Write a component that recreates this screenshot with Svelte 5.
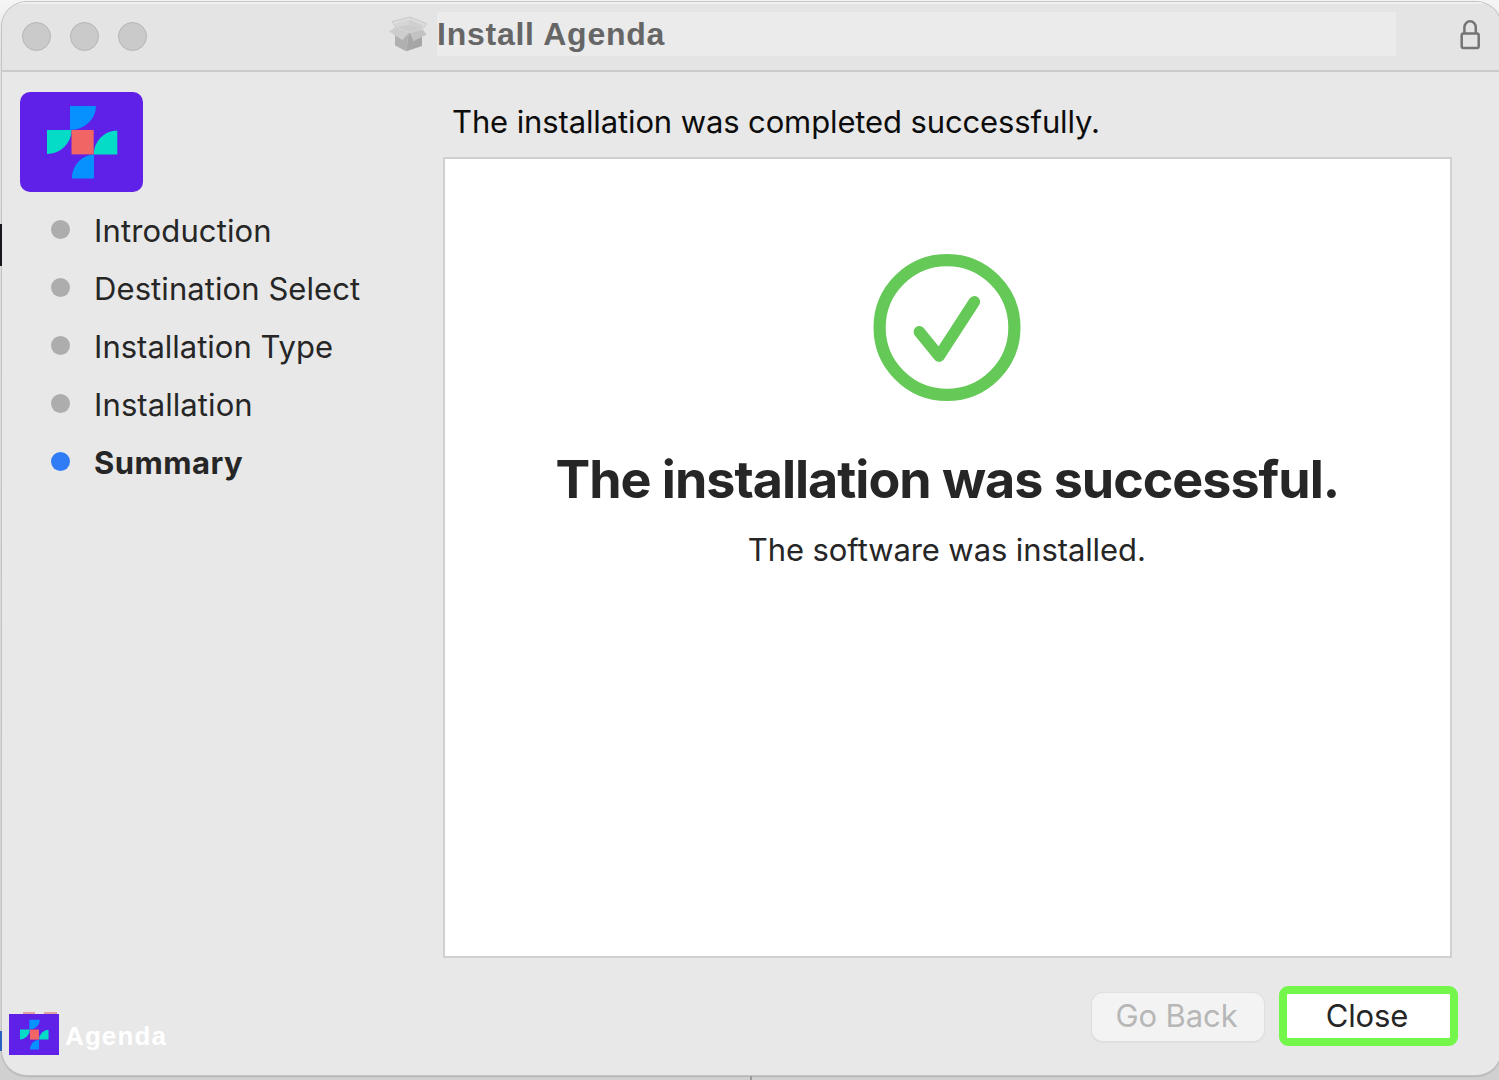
<script>
  const steps = [
    { label: 'Introduction', cls: 'intro' },
    { label: 'Destination Select', cls: 'dest' },
    { label: 'Installation Type', cls: 'kind' },
    { label: 'Installation', cls: 'inst' },
    { label: 'Summary', cls: 'current' }
  ];
</script>

{#snippet brand()}
  <svg viewBox="0 0 123 100" preserveAspectRatio="none" aria-hidden="true">
    <path d="M50 14H76A26 24 0 0 1 50 38Z" fill="#0691ff" />
    <path d="M27 38H51.500A24.500 24 0 0 1 27 62Z" fill="#04dcc8" />
    <path d="M97.300 38.500V62.400H73.800A23.500 23.900 0 0 1 97.300 38.500Z" fill="#04dcc8" />
    <path d="M74 62.600V86.600H51.800A22.200 24 0 0 1 74 62.600Z" fill="#0691ff" />
    <rect x="51.500" y="38" width="22.200" height="24.400" fill="#f26565" />
  </svg>
{/snippet}

<div class="desktop">
  <main class="window">
    <header>
      <div class="lights"><i></i><i></i><i></i></div>
      <svg class="box" viewBox="0 0 40 36" aria-hidden="true">
        <path d="M7 11 21 15 18.300 35.300 7 29.500Z" fill="#b0b0b0" />
        <path d="M21 15 34 13V30L18.300 35.300Z" fill="#a6a6a6" />
        <path d="M7.500 11 9 4.500 22 2.500 35.500 8 34 13.500 20.500 16.500Z" fill="#cbcbcb" />
        <path d="M9 5.500 22 2.500 21 9 8 11Z" fill="#d6d6d6" />
        <path d="M22 3 35.500 8 33 12.500 21 9Z" fill="#cfcfcf" />
        <path d="M4 5.500 22 1 38.700 7.700 34.500 13 34.300 9 22 4 8.500 7 8 11Z" fill="#dcdcdc" />
        <path d="M4 5.500 22 1 38.700 7.700 34.500 13M4 5.500 8 11" fill="none" stroke="#bfbfbf" stroke-width=".7" />
        <path d="M8 11 21.500 16.500 14.300 24 1 15.500Z" fill="#cdcdcd" />
        <path d="M21.500 16.500 34.500 13 38.500 18.500 25.500 25.300Z" fill="#c3c3c3" />
        <path d="M8 11 21.500 16.500 34.500 13" fill="none" stroke="#dadada" stroke-width=".8" />
      </svg>
      <h1>Install Agenda</h1>
      <svg class="lock" viewBox="0 0 20 30" aria-hidden="true">
        <path d="M4.400 13.500V7.500a5.700 6.200 0 0 1 11.400 0v6" />
        <rect x="1.700" y="13.500" width="17" height="14.500" rx="1.800" />
      </svg>
    </header>

    <div class="body">
      <aside>
        <div class="logo">{@render brand()}</div>
        <ol>
          {#each steps as step}
            <li class={step.cls}><i></i><span>{step.label}</span></li>
          {/each}
        </ol>
        <div class="app"><div class="mini">{@render brand()}</div><span>Agenda</span><i class="peek"></i></div>
      </aside>

      <section>
        <p class="caption">The installation was completed successfully.</p>
        <div class="panel">
          <svg class="check" viewBox="0 0 148 148" aria-hidden="true">
            <circle cx="74" cy="73.500" r="67.400" stroke-width="12.200" />
            <path d="M46.400 77.800 66.100 102.100 101.300 47.800" stroke-width="11.600" />
          </svg>
          <h2>The installation was successful.</h2>
          <p>The software was installed.</p>
        </div>
        <footer>
          <button class="back" disabled>Go Back</button>
          <button class="close"><span>Close</span></button>
        </footer>
      </section>
    </div>
  </main>
  <i class="sliver dark"></i>
  <i class="sliver blue"></i>
  <i class="sliver tick"></i>
</div>

<style>
  :global(body) { overflow: hidden; }
  .desktop {
    position: relative;
    box-sizing: border-box;
    width: 1499px;
    height: 1080px;
    padding: 2px 0 0 2px;
    overflow: hidden;
    background: linear-gradient(#f5f5f5, #e6e6e6 60px, #d5d5d5 1020px, #d0d0d0);
    font-family: Inter, 'Liberation Sans', sans-serif;
    font-size: 31px;
    color: #262626;
  }
  .sliver { position: absolute; }
  .dark { left: 0; top: 224px; width: 2px; height: 42px; background: #17181d; }
  .blue { left: 0; top: 1031px; width: 2px; height: 20px; background: #2860c0; }
  .tick { left: 750px; top: 1076px; width: 2px; height: 4px; background: #999; }
  .window {
    position: relative;
    width: 1499px;
    height: 1073px;
    border-radius: 25px;
    background: #e8e8e8;
    box-shadow: 0 0 0 1px #c4c4c4, 0 1px 1px 1px #b4b4b4;
    overflow: hidden;
  }
  header {
    display: flex;
    box-sizing: border-box;
    height: 70px;
    padding: 10px 0 0 19.600px;
    background: #e4e4e4;
    border-bottom: 2px solid #cacaca;
    box-shadow: inset 0 2px 0 #f0f0f0;
  }
  .lights { display: flex; gap: 19.200px; padding-top: 10px; width: 366.400px; }
  .lights i {
    box-sizing: border-box;
    width: 29px;
    height: 29px;
    border: 1.500px solid #b5b5b5;
    border-radius: 50%;
    background: #cacaca;
  }
  .box { width: 40px; height: 36px; margin-top: 4px; }
  h1 {
    box-sizing: border-box;
    width: 959px;
    height: 44px;
    margin: 0 0 0 9px;
    background: #ebebeb;
    color: #666;
    font: 700 32px/44px 'Liberation Sans', sans-serif;
    letter-spacing: .76px;
  }
  .lock { width: 20px; height: 30px; margin: 7.700px 0 0 64.300px; fill: none; stroke: #747474; stroke-width: 2.500; }
  .body { display: flex; }
  aside { display: flex; flex-direction: column; width: 440.600px; height: 1003px; }
  .logo { width: 123px; height: 100px; margin: 20px 0 0 18px; border-radius: 10px; background: #5f20e7; }
  svg { display: block; flex: none; }
  .logo svg, .mini svg { width: 100%; height: 100%; }
  ol { margin: 9px 0 0 48.600px; padding: 0; list-style: none; }
  li { display: flex; align-items: center; height: 58px; line-height: 56px; }
  li i { width: 19.500px; height: 19.500px; margin: -1px 24px 0 0; border-radius: 50%; background: #adadad; }
  li span { padding-top: 2px; white-space: nowrap; }
  .intro { letter-spacing: .13px; }
  .dest { letter-spacing: .07px; }
  .inst { letter-spacing: .08px; }
  .current { font-weight: 700; letter-spacing: .45px; }
  .current i { background: #307cf7; }
  .app { position: relative; display: flex; gap: 6px; margin: 523px 0 0 7px; }
  .mini { width: 50px; height: 41px; background: #5f20e7; }
  .app span { height: 43px; color: #fff; font: 700 26px/45px 'Liberation Sans', sans-serif; letter-spacing: 1.100px; }
  .peek {
    position: absolute;
    left: 14px;
    top: -2px;
    width: 34px;
    height: 2px;
    background: linear-gradient(90deg, #e0a09f 12px, transparent 12px 21px, #e0a09f 21px);
  }
  section { width: 1009.400px; }
  p, h2 { margin: 0; white-space: nowrap; }
  .caption { height: 66px; margin-top: 19px; padding-left: 9.400px; color: #0c0c0c; line-height: 62px; letter-spacing: -.12px; }
  .panel {
    display: flex;
    flex-direction: column;
    align-items: center;
    box-sizing: border-box;
    height: 801px;
    padding-top: 95px;
    border: 2px solid #d0d0d0;
    background: #fff;
  }
  .check { width: 148px; height: 148px; fill: none; stroke: #65c957; stroke-linecap: round; stroke-linejoin: round; }
  h2 { margin-top: 43px; font-size: 52px; line-height: 70px; font-weight: 700; letter-spacing: -1px; }
  .panel p { margin-top: 15px; margin-left: -1px; line-height: 40px; letter-spacing: -.1px; }
  footer { display: flex; align-items: center; justify-content: flex-end; gap: 15px; margin: 28px -6px 0 0; }
  button { box-sizing: border-box; margin: 0; padding: 0; font: inherit; }
  .back {
    width: 172px;
    height: 48px;
    margin-top: 2px;
    padding: 0 3px 3px 0;
    border: 0;
    border-radius: 11px;
    background: #f3f3f3;
    color: #b7b7b7;
    box-shadow: 0 0 1px 1px #dfdfdf, 0 1px 2px #ccc;
    letter-spacing: -.1px;
  }
  .close {
    width: 179px;
    height: 60px;
    padding: 0 3px 2px 0;
    border: 8px solid #74f64b;
    border-radius: 9px;
    background: #fff;
    color: #262626;
    letter-spacing: -.1px;
  }
</style>
